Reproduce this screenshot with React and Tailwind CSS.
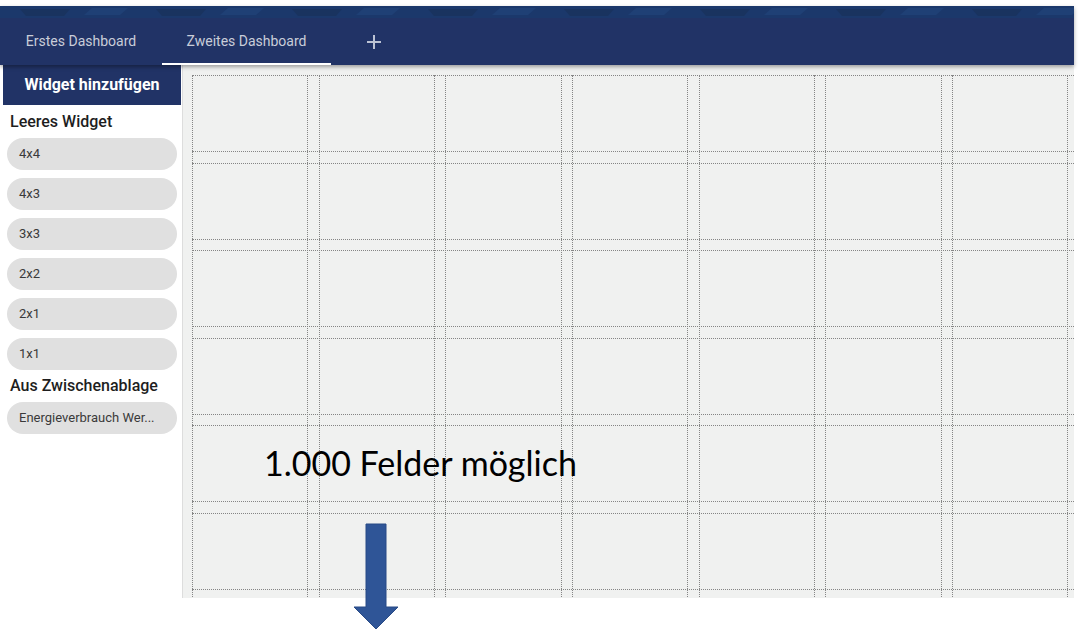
import React from 'react';

const sizes = ['4x4', '4x3', '3x3', '2x2', '2x1', '1x1'];
const cols = Array(8).fill(0);
const rows = Array(7).fill(0);

const Pill = ({ children }) => (
  <div className="ml-[4px] mb-[8px] h-[32px] w-[170px] rounded-full bg-[#e0e0e0] flex items-center pl-[12px] text-[13px] text-[#3a3a3a] whitespace-nowrap overflow-hidden">
    {children}
  </div>
);

const App = () => {
  return (
    <div className="relative w-[1081px] h-[632px] bg-white overflow-hidden" style={{ fontFamily: 'Roboto, "Noto Sans", sans-serif' }}>
      <div className="mt-[6px] w-[1074px] h-[592px] flex flex-col">
        {/* header */}
        <div className="relative z-10 shadow-[0_2px_4px_rgba(0,0,0,0.35)]">
          <div className="h-[12px] bg-[#1b386b] overflow-hidden">
            <svg width="1074" height="12" viewBox="0 0 1074 12">
              {[0, 1, 2, 3, 4, 5, 6, 7].map(i => (
                <g key={i} transform={`translate(${i * 136} 0)`}>
                  <polygon points="20,3 70,3 64,10 26,10" fill="#19335f" />
                  <polygon points="92,2 128,2 120,9 84,9" fill="#1f4075" />
                </g>
              ))}
            </svg>
          </div>
          <div className="h-[47px] bg-[#213366] flex items-stretch text-[14px] text-[#c9cdd9]">
            <div className="w-[162px] flex items-center justify-center">Erstes Dashboard</div>
            <div className="w-[169px] flex items-center justify-center border-b-2 border-white pt-[2px]">Zweites Dashboard</div>
            <div className="ml-[36px] flex items-center">
              <svg width="14" height="14" viewBox="0 0 14 14">
                <path d="M7 0v14M0 7h14" stroke="#bcc3d4" strokeWidth="2" />
              </svg>
            </div>
          </div>
        </div>

        <div className="flex flex-1 min-h-0">
          {/* sidebar */}
          <div className="w-[183px] pl-[3px] bg-white border-r border-[#dddddd] flex flex-col">
            <div className="h-[40px] w-[178px] bg-[#213366] flex items-center justify-center text-white font-bold text-[16px]">
              Widget hinzufügen
            </div>
            <div className="h-[33px] flex items-center pl-[7px] text-[16px] font-medium text-[#1e1e1e]">Leeres Widget</div>
            {sizes.map(s => <Pill key={s}>{s}</Pill>)}
            <div className="-mt-[8px] h-[32px] flex items-center pl-[7px] text-[16px] font-medium text-[#1e1e1e]">Aus Zwischenablage</div>
            <Pill>Energieverbrauch Wer...</Pill>
          </div>

          {/* grid area */}
          <div className="flex-1 bg-[#f0f1f0] overflow-hidden pl-[9px] pt-[10px]">
            <div className="relative h-[700px] w-[1100px]">
              <div className="flex gap-x-[10.4px] h-full">
                {cols.map((_, i) => (
                  <div key={i} className="w-[116.3px] shrink-0 h-full border-x border-dotted border-[#858585]" />
                ))}
              </div>
              <div className="absolute inset-0 flex flex-col gap-y-[10.6px]">
                {rows.map((_, i) => (
                  <div key={i} className="h-[77px] shrink-0 w-full border-y border-dotted border-[#858585]" />
                ))}
              </div>
            </div>
          </div>
        </div>
      </div>

      {/* annotation */}
      <div className="absolute left-[264px] top-[446px] text-[34px] leading-none text-black whitespace-nowrap" style={{ fontFamily: 'Lato, "Open Sans", sans-serif' }}>
        1.000 Felder möglich
      </div>
      <svg className="absolute left-[352px] top-[523px]" width="48" height="108" viewBox="0 0 48 108">
        <polygon points="14,1 34,1 34,84 46,84 24,106 2,84 14,84" fill="#2f5597" stroke="#284a86" strokeWidth="1" />
      </svg>
    </div>
  );
};

export default App;
